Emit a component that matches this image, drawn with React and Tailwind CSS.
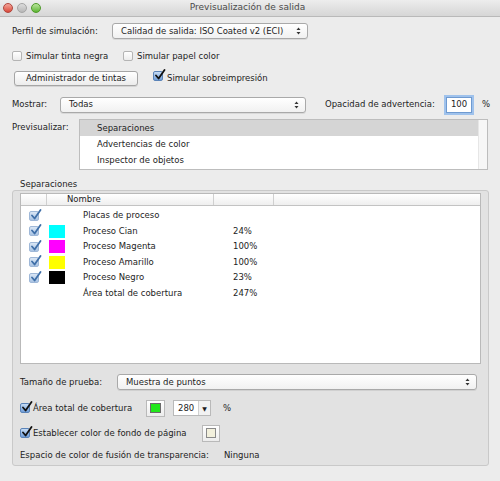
import React from 'react';

const font = { fontFamily: '"DejaVu Sans", "Liberation Sans", sans-serif' };

const UpDown = () => (
  <svg width="5" height="8" viewBox="0 0 5 8" className="shrink-0">
    <path d="M2.5 0.5 L4.5 3 L0.5 3 Z" fill="#333" />
    <path d="M2.5 7.5 L4.5 5 L0.5 5 Z" fill="#333" />
  </svg>
);

const Select = ({ value, className = '' }) => (
  <div
    className={`flex h-[16px] shrink-0 items-center justify-between rounded-[3px] border border-[#a9a9a9] bg-gradient-to-b from-white to-[#f1f1f1] pl-[8px] pr-[6px] shadow-[0_1px_0_rgba(0,0,0,0.08)] ${className}`}
  >
    <span>{value}</span>
    <UpDown />
  </div>
);

const Check = ({ checked, soft }) => {
  if (!checked) {
    return (
      <span className="inline-block h-[10px] w-[10px] shrink-0 rounded-[2px] border border-[#b4b4b4] bg-gradient-to-b from-white to-[#ececec]" />
    );
  }
  return (
    <span
      className={`relative inline-block h-[10px] w-[10px] shrink-0 rounded-[2px] border ${
        soft ? 'border-[#9fb8d8] bg-gradient-to-b from-[#d9e6f5] to-[#a9c3e3]' : 'border-[#5a83b8] bg-gradient-to-b from-[#c6dcf5] to-[#6f9dd8]'
      }`}
    >
      <svg width="12" height="12" viewBox="0 0 12 12" className="absolute left-[0px] top-[-3px]">
        <path
          d="M2 6.5 L4.6 9.5 L10.5 1"
          fill="none"
          stroke={soft ? '#3f6fa8' : '#111'}
          strokeWidth="1.8"
          strokeLinecap="round"
          strokeLinejoin="round"
        />
      </svg>
    </span>
  );
};

const rows = [
  { name: 'Placas de proceso', pct: '', swatch: null },
  { name: 'Proceso Cian', pct: '24%', swatch: 'bg-[#00ffff]' },
  { name: 'Proceso Magenta', pct: '100%', swatch: 'bg-[#ff00ff]' },
  { name: 'Proceso Amarillo', pct: '100%', swatch: 'bg-[#ffff00]' },
  { name: 'Proceso Negro', pct: '23%', swatch: 'bg-black' },
  { name: 'Área total de cobertura', pct: '247%', swatch: null, noCheck: true },
];

export default function App() {
  return (
    <div style={font} className="h-[481px] w-[500px] overflow-hidden whitespace-nowrap bg-[#ececec] text-[8.5px] text-[#1d1d1d]">
      {/* title bar */}
      <div className="flex h-[17px] items-center border-b border-[#b9b9b9] bg-gradient-to-b from-[#ededed] to-[#d6d6d6] px-[3px]">
        <div className="flex w-[120px] items-center gap-[4px]">
          <span className="h-[10px] w-[10px] rounded-full bg-gradient-to-b from-[#f3a49a] to-[#d9473a] border border-[#b0463d]" />
          <span className="h-[10px] w-[10px] rounded-full bg-gradient-to-b from-[#dcdcdc] to-[#b8b8b8] border border-[#a5a5a5]" />
          <span className="h-[10px] w-[10px] rounded-full bg-gradient-to-b from-[#b9e59a] to-[#5db52f] border border-[#4e9a2a]" />
        </div>
        <div className="flex-1 pr-[125px] text-center text-[9px] text-[#4a4a4a]">Previsualización de salida</div>
      </div>

      <div className="px-[12px] pt-[5px]">
        {/* perfil */}
        <div className="flex h-[18px] items-center">
          <span className="w-[100px]">Perfil de simulación:</span>
          <Select value="Calidad de salida: ISO Coated v2 (ECI)" className="w-[196px]" />
        </div>

        {/* simular */}
        <div className="mt-[9px] flex h-[14px] items-center">
          <Check />
          <span className="ml-[4px] w-[97px]">Simular tinta negra</span>
          <Check />
          <span className="ml-[4px]">Simular papel color</span>
        </div>

        {/* tintas */}
        <div className="mt-[7px] flex h-[16px] items-center">
          <div className="ml-[2px] flex h-[15px] w-[124px] items-center justify-center rounded-[3px] border border-[#a5a5a5] bg-gradient-to-b from-white to-[#ececec] shadow-[0_1px_0_rgba(0,0,0,0.1)]">
            Administrador de tintas
          </div>
          <span className="ml-[15px]"><Check checked /></span>
          <span className="ml-[4px]">Simular sobreimpresión</span>
        </div>

        {/* mostrar */}
        <div className="mt-[10px] flex h-[17px] items-center">
          <span className="w-[48px] shrink-0">Mostrar:</span>
          <Select value="Todas" className="w-[246px]" />
          <span className="ml-[19px] w-[112px] shrink-0">Opacidad de advertencia:</span>
          <div className="ml-[9px] flex h-[16px] w-[26px] shrink-0 items-center justify-center border border-[#6f9ad0] bg-white shadow-[0_0_0_2px_#9fc2ec]">
            100
          </div>
          <span className="ml-[10px]">%</span>
        </div>

        {/* previsualizar */}
        <div className="mt-[6px] flex">
          <span className="mt-[2px] w-[67px]">Previsualizar:</span>
          <div className="flex h-[51px] flex-1 border border-[#bdbdbd] bg-white">
            <div className="flex-1">
              <div className="flex h-[16px] items-center bg-[#d5d5d5] pl-[17px]">Separaciones</div>
              <div className="flex h-[16px] items-center pl-[17px]">Advertencias de color</div>
              <div className="flex h-[16px] items-center pl-[17px]">Inspector de objetos</div>
            </div>
            <div className="w-[9px] border-l border-[#e6e6e6] bg-[#f7f7f7]" />
          </div>
        </div>

        {/* separaciones group */}
        <div className="mt-[8px] pl-[8px] leading-[12px]">Separaciones</div>
        <div className="mt-[0px] w-[477px] rounded-[3px] border border-[#c9c9c9] bg-[#e2e2e2] px-[7px] pb-[4px] pt-[2px]">
          <div className="h-[171px] border border-[#b9b9b9] bg-white">
            <div className="flex h-[12px] items-center border-b border-[#c3c3c3] bg-gradient-to-b from-white to-[#efefef]">
              <span className="h-full w-[26px] border-r border-[#d0d0d0]" />
              <span className="h-full w-[167px] border-r border-[#d0d0d0] pl-[20px] leading-[11px]">Nombre</span>
              <span className="h-full w-[60px] border-r border-[#d0d0d0]" />
            </div>
            <div className="pt-[2px]">
              {rows.map((r) => (
                <div key={r.name} className="flex h-[15.5px] items-center">
                  <span className="flex w-[26px] justify-center">
                    {!r.noCheck && <Check checked soft />}
                  </span>
                  <span className="w-[36px] pl-[2px]">
                    {r.swatch && <span className={`block h-[13px] w-[16px] ${r.swatch}`} />}
                  </span>
                  <span className="w-[150px]">{r.name}</span>
                  <span>{r.pct}</span>
                </div>
              ))}
            </div>
          </div>

          <div className="mt-[10px] flex h-[16px] items-center">
            <span className="w-[97px]">Tamaño de prueba:</span>
            <Select value="Muestra de puntos" className="w-[360px]" />
          </div>

          <div className="mt-[9px] flex h-[18px] items-center">
            <Check checked />
            <span className="ml-[3px] w-[113px]">Área total de cobertura</span>
            <div className="flex h-[17px] w-[19px] items-center justify-center border border-[#b9b9b9] bg-gradient-to-b from-white to-[#ececec]">
              <span className="h-[10px] w-[11px] border border-[#6a6a6a] bg-[#22e81c]" />
            </div>
            <div className="ml-[8px] flex h-[16px] w-[38px] items-center border border-[#b9b9b9] bg-white">
              <span className="flex-1 pl-[4px]">280</span>
              <span className="flex h-full w-[12px] items-center justify-center border-l border-[#d0d0d0] bg-[#f2f2f2] text-[6px]">▼</span>
            </div>
            <span className="ml-[12px]">%</span>
          </div>

          <div className="mt-[7px] flex h-[18px] items-center">
            <Check checked />
            <span className="ml-[3px] w-[169px]">Establecer color de fondo de página</span>
            <div className="flex h-[17px] w-[18px] items-center justify-center border border-[#b9b9b9] bg-gradient-to-b from-white to-[#ececec]">
              <span className="h-[10px] w-[10px] border border-[#8a8a8a] bg-[#f2f0dc]" />
            </div>
          </div>

          <div className="mt-[7px] flex h-[12px] items-center">
            <span className="w-[204px]">Espacio de color de fusión de transparencia:</span>
            <span>Ninguna</span>
          </div>
        </div>
      </div>
    </div>
  );
}
